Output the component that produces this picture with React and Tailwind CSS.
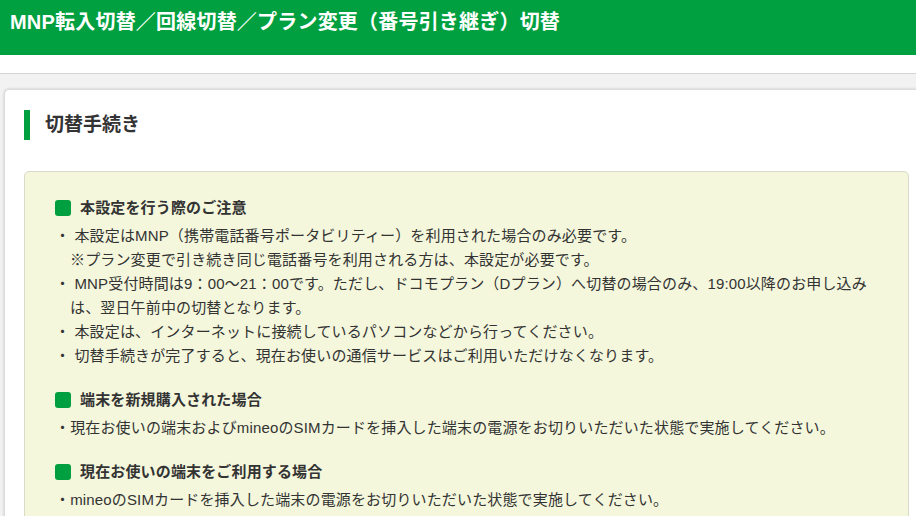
// --- 1. IMPORTS ---
import React from 'react';

// --- 2. DONNÉES ---
const notes = [
    {
        text: '・ 本設定はMNP（携帯電話番号ポータビリティー）を利用された場合のみ必要です。',
        sub: '※プラン変更で引き続き同じ電話番号を利用される方は、本設定が必要です。',
    },
    {
        text: '・ MNP受付時間は9：00〜21：00です。ただし、ドコモプラン（Dプラン）へ切替の場合のみ、19:00以降のお申し込み',
        sub: 'は、翌日午前中の切替となります。',
    },
    { text: '・ 本設定は、インターネットに接続しているパソコンなどから行ってください。' },
    { text: '・ 切替手続きが完了すると、現在お使いの通信サービスはご利用いただけなくなります。' },
];

// --- 3. SOUS-COMPOSANTS ---
const SectionTitle = ({ children, className = '' }) => (
    <div className={`flex items-center gap-[9px] h-6 ${className}`}>
        <span className="w-4 h-4 rounded-[3px] bg-[#00a040] shrink-0" />
        <h3 className="text-[15px] leading-6 font-bold text-[#333]">{children}</h3>
    </div>
);

// --- 4. PAGE ---
const App = () => {
    return (
        <div className="w-[916px] h-[516px] overflow-hidden bg-[#f2f2f2] font-['Liberation_Sans','Noto_Sans_CJK_JP',sans-serif] text-[#333]">
            {/* -- EN-TÊTE -- */}
            <header className="h-[55px] bg-[#00a040] px-[10px] pt-[8px]">
                <h1 className="text-[20px] leading-[28px] font-bold text-white whitespace-nowrap tracking-[0.2px]">
                    MNP転入切替／回線切替／プラン変更（番号引き継ぎ）切替
                </h1>
            </header>
            <div className="h-[19px] bg-white border-b border-[#d5d5d5]" />

            {/* -- CARTE -- */}
            <div className="pl-[4px] pt-[15px]">
                <div className="w-[925px] bg-white rounded-[5px] border border-[#dcdcdc] shadow-[0_0_3px_rgba(0,0,0,0.18)] px-[19px] pt-[20px] pb-10">
                    <div className="flex items-center h-[30px] border-l-[6px] border-[#00a040] pl-[15px]">
                        <h2 className="text-[19px] leading-[30px] font-bold text-[#333]">切替手続き</h2>
                    </div>

                    <div className="mt-[31px] w-[885px] bg-[#f4f7dc] border border-[#d9dbc8] rounded-[5px] pl-[30px] pr-[20px] pt-[24px] pb-6 tracking-[0.15px]">
                        <SectionTitle>本設定を行う際のご注意</SectionTitle>
                        <div className="mt-1 text-[15px] leading-6 whitespace-nowrap">
                            {notes.map((n, i) => (
                                <p key={i} className="pl-[15px] -indent-[15px]">
                                    {n.text}
                                    {n.sub && (
                                        <>
                                            <br />
                                            {n.sub}
                                        </>
                                    )}
                                </p>
                            ))}
                        </div>

                        <SectionTitle className="mt-5">端末を新規購入された場合</SectionTitle>
                        <p className="mt-1 text-[15px] leading-6 whitespace-nowrap">
                            ・現在お使いの端末およびmineoのSIMカードを挿入した端末の電源をお切りいただいた状態で実施してください。
                        </p>

                        <SectionTitle className="mt-5">現在お使いの端末をご利用する場合</SectionTitle>
                        <p className="mt-1 text-[15px] leading-6 whitespace-nowrap">
                            ・mineoのSIMカードを挿入した端末の電源をお切りいただいた状態で実施してください。
                        </p>
                    </div>
                </div>
            </div>
        </div>
    );
};

export default App;
